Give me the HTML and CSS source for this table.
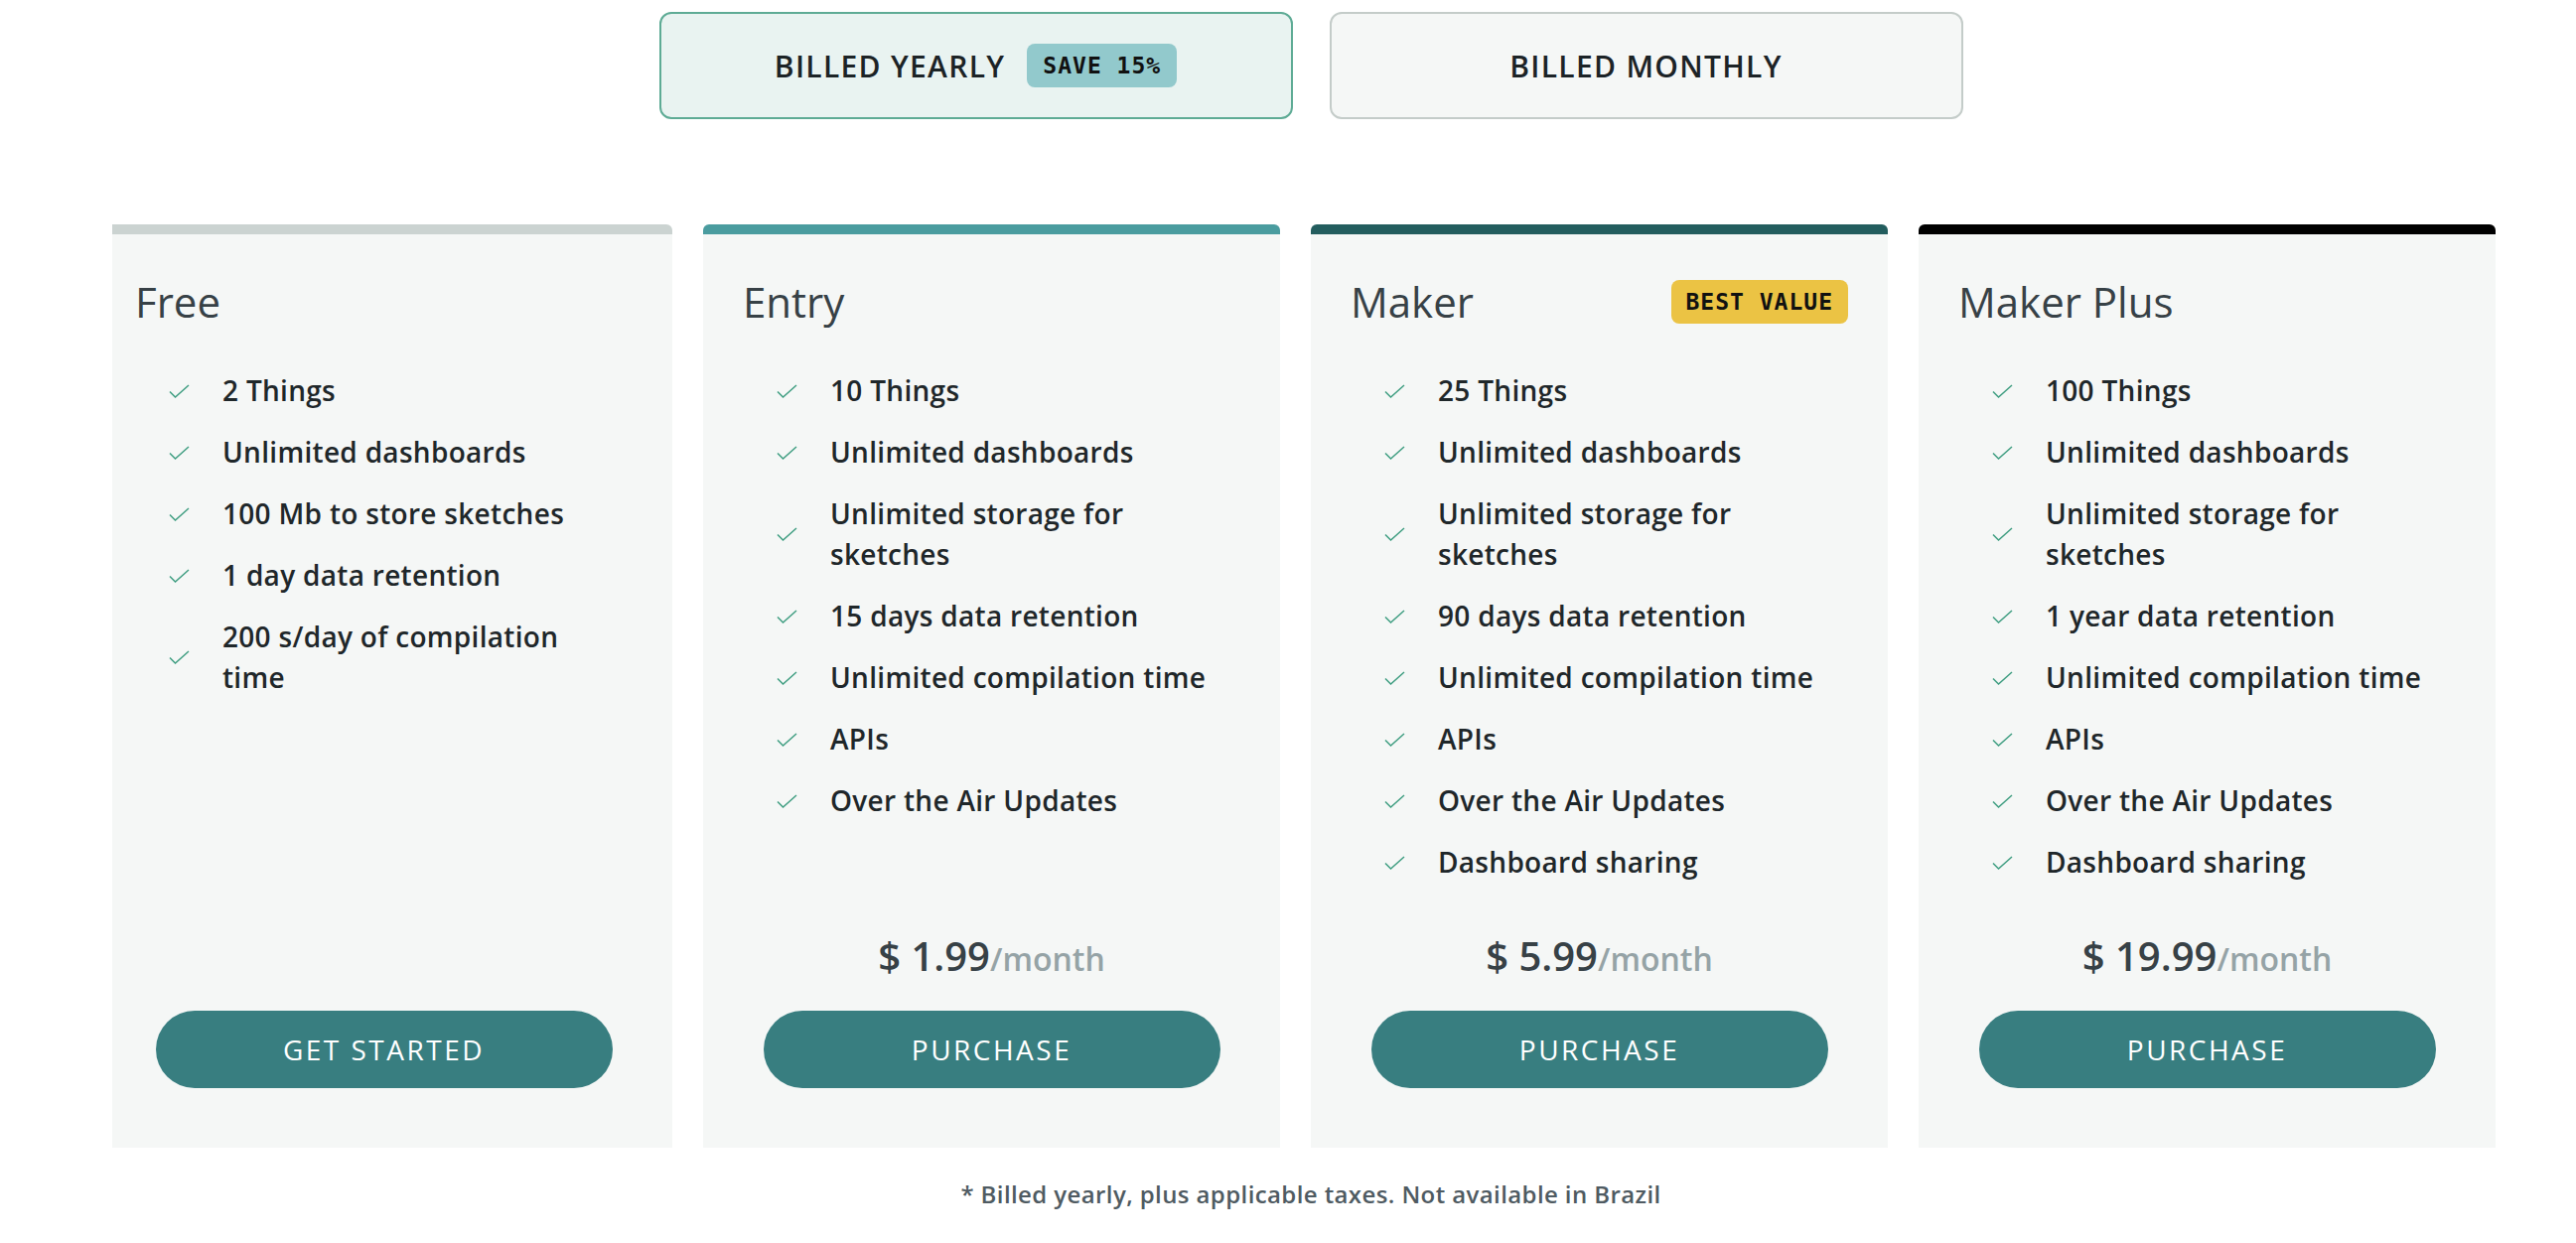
FILE: index.html
```html
<!DOCTYPE html>
<html lang="en">
<head>
  <meta charset="UTF-8">
  <meta name="viewport" content="width=device-width, initial-scale=1.0">
  <title>Plans</title>
  <link rel="stylesheet" href="styles.css">
</head>
<body>

  <div class="page">
    <div class="billing">
      <button class="billing-option active">BILLED YEARLY <span class="tag tag-save">SAVE 15%</span></button>
      <button class="billing-option">BILLED MONTHLY</button>
    </div>

    <div class="plans">
      <div class="plan plan-free">
        <div class="plan-head">
          <h3>Free</h3>
        </div>
        <ul class="features">
          <li><svg class="check" viewBox="0 0 21 14"><path d="M1 7.5 L6.5 13 L20 1"/></svg><span>2 Things</span></li>
          <li><svg class="check" viewBox="0 0 21 14"><path d="M1 7.5 L6.5 13 L20 1"/></svg><span>Unlimited dashboards</span></li>
          <li><svg class="check" viewBox="0 0 21 14"><path d="M1 7.5 L6.5 13 L20 1"/></svg><span>100 Mb to store sketches</span></li>
          <li><svg class="check" viewBox="0 0 21 14"><path d="M1 7.5 L6.5 13 L20 1"/></svg><span>1 day data retention</span></li>
          <li><svg class="check" viewBox="0 0 21 14"><path d="M1 7.5 L6.5 13 L20 1"/></svg><span>200 s/day of compilation time</span></li>
        </ul>
        <div class="plan-foot">
          <button class="plan-btn">GET STARTED</button>
        </div>
      </div>

      <div class="plan plan-entry">
        <div class="plan-head">
          <h3>Entry</h3>
        </div>
        <ul class="features">
          <li><svg class="check" viewBox="0 0 21 14"><path d="M1 7.5 L6.5 13 L20 1"/></svg><span>10 Things</span></li>
          <li><svg class="check" viewBox="0 0 21 14"><path d="M1 7.5 L6.5 13 L20 1"/></svg><span>Unlimited dashboards</span></li>
          <li><svg class="check" viewBox="0 0 21 14"><path d="M1 7.5 L6.5 13 L20 1"/></svg><span>Unlimited storage for sketches</span></li>
          <li><svg class="check" viewBox="0 0 21 14"><path d="M1 7.5 L6.5 13 L20 1"/></svg><span>15 days data retention</span></li>
          <li><svg class="check" viewBox="0 0 21 14"><path d="M1 7.5 L6.5 13 L20 1"/></svg><span>Unlimited compilation time</span></li>
          <li><svg class="check" viewBox="0 0 21 14"><path d="M1 7.5 L6.5 13 L20 1"/></svg><span>APIs</span></li>
          <li><svg class="check" viewBox="0 0 21 14"><path d="M1 7.5 L6.5 13 L20 1"/></svg><span>Over the Air Updates</span></li>
        </ul>
        <div class="plan-foot">
          <p class="price">$ 1.99<span class="per">/month</span></p>
          <button class="plan-btn">PURCHASE</button>
        </div>
      </div>

      <div class="plan plan-maker">
        <div class="plan-head">
          <h3>Maker</h3>
          <span class="tag tag-best">BEST VALUE</span>
        </div>
        <ul class="features">
          <li><svg class="check" viewBox="0 0 21 14"><path d="M1 7.5 L6.5 13 L20 1"/></svg><span>25 Things</span></li>
          <li><svg class="check" viewBox="0 0 21 14"><path d="M1 7.5 L6.5 13 L20 1"/></svg><span>Unlimited dashboards</span></li>
          <li><svg class="check" viewBox="0 0 21 14"><path d="M1 7.5 L6.5 13 L20 1"/></svg><span>Unlimited storage for sketches</span></li>
          <li><svg class="check" viewBox="0 0 21 14"><path d="M1 7.5 L6.5 13 L20 1"/></svg><span>90 days data retention</span></li>
          <li><svg class="check" viewBox="0 0 21 14"><path d="M1 7.5 L6.5 13 L20 1"/></svg><span>Unlimited compilation time</span></li>
          <li><svg class="check" viewBox="0 0 21 14"><path d="M1 7.5 L6.5 13 L20 1"/></svg><span>APIs</span></li>
          <li><svg class="check" viewBox="0 0 21 14"><path d="M1 7.5 L6.5 13 L20 1"/></svg><span>Over the Air Updates</span></li>
          <li><svg class="check" viewBox="0 0 21 14"><path d="M1 7.5 L6.5 13 L20 1"/></svg><span>Dashboard sharing</span></li>
        </ul>
        <div class="plan-foot">
          <p class="price">$ 5.99<span class="per">/month</span></p>
          <button class="plan-btn">PURCHASE</button>
        </div>
      </div>

      <div class="plan plan-plus">
        <div class="plan-head">
          <h3>Maker Plus</h3>
        </div>
        <ul class="features">
          <li><svg class="check" viewBox="0 0 21 14"><path d="M1 7.5 L6.5 13 L20 1"/></svg><span>100 Things</span></li>
          <li><svg class="check" viewBox="0 0 21 14"><path d="M1 7.5 L6.5 13 L20 1"/></svg><span>Unlimited dashboards</span></li>
          <li><svg class="check" viewBox="0 0 21 14"><path d="M1 7.5 L6.5 13 L20 1"/></svg><span>Unlimited storage for sketches</span></li>
          <li><svg class="check" viewBox="0 0 21 14"><path d="M1 7.5 L6.5 13 L20 1"/></svg><span>1 year data retention</span></li>
          <li><svg class="check" viewBox="0 0 21 14"><path d="M1 7.5 L6.5 13 L20 1"/></svg><span>Unlimited compilation time</span></li>
          <li><svg class="check" viewBox="0 0 21 14"><path d="M1 7.5 L6.5 13 L20 1"/></svg><span>APIs</span></li>
          <li><svg class="check" viewBox="0 0 21 14"><path d="M1 7.5 L6.5 13 L20 1"/></svg><span>Over the Air Updates</span></li>
          <li><svg class="check" viewBox="0 0 21 14"><path d="M1 7.5 L6.5 13 L20 1"/></svg><span>Dashboard sharing</span></li>
        </ul>
        <div class="plan-foot">
          <p class="price">$ 19.99<span class="per">/month</span></p>
          <button class="plan-btn">PURCHASE</button>
        </div>
      </div>
    </div>

    <p class="note">* Billed yearly, plus applicable taxes. Not available in Brazil</p>
  </div>

</body>
</html>
```

FILE: styles.css
```css
body {
  font-family: 'Open Sans', 'Noto Sans', sans-serif;
  background-color: #fff;
  margin: 0;
  color: #1f272a;
}

.page {
  padding: 12px 81px 0 113px;
}

/* selector de facturación */
.billing {
  display: flex;
  justify-content: center;
  gap: 37px;
  padding-left: 14px;
}

.billing-option {
  display: flex;
  align-items: center;
  justify-content: center;
  gap: 22px;
  width: 638px;
  height: 108px;
  font-family: 'Open Sans', sans-serif;
  font-size: 30px;
  font-weight: 600;
  letter-spacing: 1.3px;
  color: #1c2326;
  background-color: #f5f7f6;
  border: 2px solid #c4ccc9;
  border-radius: 12px;
  cursor: pointer;
}

.billing-option.active {
  background-color: #e9f3f1;
  border-color: #5eab95;
}

.tag {
  font-family: 'DejaVu Sans Mono', monospace;
  font-weight: bold;
  font-size: 23px;
  letter-spacing: 1px;
  line-height: 44px;
  height: 44px;
  padding: 0 16px;
  border-radius: 8px;
  color: #111;
}

.tag-save {
  background-color: #92c9cc;
}

.tag-best {
  background-color: #ebc344;
  padding: 0 15px;
}

/* tarjetas */
.plans {
  display: grid;
  grid-template-columns: 564px repeat(3, 581px);
  gap: 31px;
  margin-top: 106px;
}

.plan {
  display: flex;
  flex-direction: column;
  background-color: #f5f7f6;
  border-top: 10px solid #cbd3d1;
  border-radius: 6px 6px 0 0;
  padding: 44px 40px 60px 40px;
}

.plan-free {
  border-top-left-radius: 0;
  padding-left: 23px;
}

.plan-entry { border-top-color: #4a9c9f; }
.plan-maker { border-top-color: #235d5e; }
.plan-plus { border-top-color: #000; }

.plan-head {
  display: flex;
  align-items: center;
  justify-content: space-between;
  height: 48px;
}

.plan-head h3 {
  margin: 0;
  font-size: 42px;
  font-weight: 400;
  line-height: 48px;
  color: #374146;
}

.features {
  list-style: none;
  margin: 45px 0 0;
  padding: 0 10px 0 34px;
  display: flex;
  flex-direction: column;
  gap: 21px;
}

.features li {
  display: flex;
  align-items: center;
  gap: 33px;
  font-size: 28px;
  font-weight: 600;
  line-height: 41px;
  letter-spacing: 0.3px;
}

.check {
  flex: none;
  width: 21px;
  height: 14px;
  fill: none;
  stroke: #3e9d80;
  stroke-width: 1.5;
}

.plan-foot {
  margin-top: auto;
  padding-top: 48px;
}

.price {
  margin: 0;
  text-align: center;
  font-size: 40px;
  font-weight: 600;
  line-height: 52px;
  color: #374146;
}

.per {
  font-size: 32px;
  color: #95a3a6;
}

.plan-btn {
  display: block;
  width: 460px;
  height: 78px;
  margin: 26px auto 0;
  border: none;
  border-radius: 39px;
  background-color: #387e80;
  color: #fff;
  font-family: 'Open Sans', sans-serif;
  font-size: 28px;
  font-weight: 500;
  letter-spacing: 2.5px;
  cursor: pointer;
}

.plan-free .plan-btn {
  margin-top: 0;
}

.note {
  margin: 31px 0 0;
  padding-left: 14px;
  text-align: center;
  font-size: 24px;
  font-weight: 600;
  letter-spacing: 0.4px;
  line-height: 32px;
  color: #4f5b62;
}
```
